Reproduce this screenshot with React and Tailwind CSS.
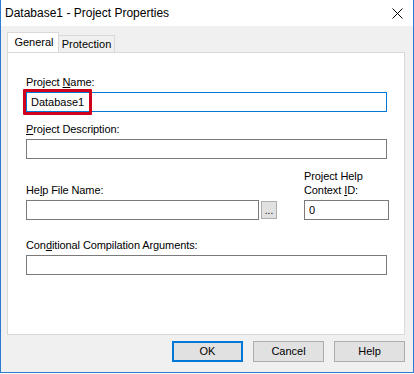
import React from "react";

const Label = ({ children, className = "" }) => (
  <div className={`text-[11px] leading-[13px] text-black tracking-[-0.1px] ${className}`}>{children}</div>
);

const TextBox = ({ value = "", focused = false, className = "" }) => (
  <div
    className={`h-[20px] bg-white border flex items-center px-[4px] text-[11px] ${
      focused ? "border-[#0078d7]" : "border-[#7a7a7a]"
    } ${className}`}
  >
    {value}
  </div>
);

const Btn = ({ children, primary = false }) => (
  <div
    className={`w-[71px] h-[21px] flex items-center justify-center text-[11px] bg-[#e1e1e1] ${
      primary ? "border-2 border-[#0078d7]" : "border border-[#adadad]"
    }`}
  >
    {children}
  </div>
);

export default function App() {
  return (
    <div
      className="w-[414px] h-[374px] flex flex-col bg-white"
      style={{ fontFamily: '"Liberation Sans", Arial, sans-serif' }}
    >
      {/* title bar */}
      <div className="h-[26px] flex items-center justify-between bg-white border-x border-[#2b7bd0] pl-[4px] pr-[10px]">
        <span className="text-[12px] text-black">Database1 - Project Properties</span>
        <svg width="11" height="11" viewBox="0 0 11 11" className="mt-[1px]">
          <path d="M0.5 0.5 L10.5 10.5 M10.5 0.5 L0.5 10.5" stroke="#000" strokeWidth="1" />
        </svg>
      </div>

      {/* body */}
      <div className="h-[347px] bg-[#f0f0f0] border-x border-b border-[#2b7bd0] px-[6px] pt-[7px] flex flex-col">
        {/* tabs */}
        <div className="flex items-end h-[19px]">
          <div className="relative z-10 h-[20px] w-[52px] bg-white border-x border-t border-[#d9d9d9] flex items-start justify-center pt-[3px] pl-[2px] text-[11px] leading-[13px]">
            General
          </div>
          <div className="h-[17px] w-[56px] bg-[#f0f0f0] border-r border-t border-[#d9d9d9] flex items-center justify-center text-[11px] leading-[13px]">
            Protection
          </div>
        </div>

        {/* panel */}
        <div className="w-[398px] h-[283px] bg-white border border-[#d9d9d9] pl-[18px] pr-[17px] pt-[23px] flex flex-col">
          <Label>
            Project <u>N</u>ame:
          </Label>
          <div className="relative mt-[3px]">
            <TextBox focused />
            <div className="absolute left-[-3px] top-[-3px] w-[69px] h-[26px] border-[3px] border-[#d0021b] rounded-[1px] flex items-center pl-[5px] text-[11px]">
              Database1
            </div>
          </div>

          <Label className="mt-[11px]">
            <u>P</u>roject Description:
          </Label>
          <TextBox className="mt-[3px]" />

          <div className="flex items-end mt-[11px]">
            <div className="flex flex-col">
              <Label>
                He<u>l</u>p File Name:
              </Label>
              <div className="flex mt-[3px] gap-[2px]">
                <TextBox className="w-[233px]" />
                <div className="w-[16px] h-[18px] mt-[1px] bg-[#e1e1e1] border border-[#adadad] flex items-end justify-center pb-[3px] text-[10px] leading-[8px]">
                  ...
                </div>
              </div>
            </div>
            <div className="flex flex-col ml-[27px]">
              <Label>Project Help</Label>
              <Label className="mt-[1px]">
                Context <u>I</u>D:
              </Label>
              <TextBox value="0" className="mt-[3px] w-[85px]" />
            </div>
          </div>

          <Label className="mt-[19px]">
            Con<u>d</u>itional Compilation Arguments:
          </Label>
          <TextBox className="mt-[3px]" />
        </div>

        {/* buttons */}
        <div className="w-[398px] flex justify-end gap-[10px] mt-[6px]">
          <Btn primary>OK</Btn>
          <Btn>Cancel</Btn>
          <Btn>Help</Btn>
        </div>
      </div>
    </div>
  );
}
